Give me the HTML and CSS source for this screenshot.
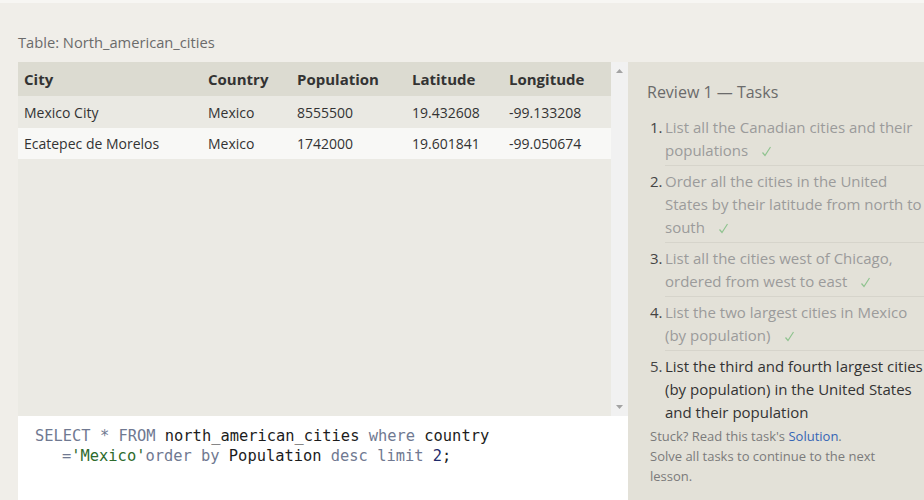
FILE: index.html
```html
<!DOCTYPE html>
<html>
<head>
<meta charset="utf-8">
<link rel="stylesheet" href="styles.css">
</head>
<body>
<div class="topstrip"></div>
<div class="page">
  <div class="left">
    <div class="title">Table: North_american_cities</div>
    <div class="tablebox">
      <div class="tablearea">
        <table class="data">
          <colgroup>
            <col class="c1"><col class="c2"><col class="c3"><col class="c4"><col class="c5">
          </colgroup>
          <thead>
            <tr><th>City</th><th>Country</th><th>Population</th><th>Latitude</th><th>Longitude</th></tr>
          </thead>
          <tbody>
            <tr class="odd"><td>Mexico City</td><td>Mexico</td><td>8555500</td><td>19.432608</td><td>-99.133208</td></tr>
            <tr class="even"><td>Ecatepec de Morelos</td><td>Mexico</td><td>1742000</td><td>19.601841</td><td>-99.050674</td></tr>
          </tbody>
        </table>
      </div>
      <div class="scrollbar">
        <svg class="arrow" width="9" height="6" viewBox="0 0 9 6"><path d="M4.5 1 L8 5 L1 5 Z" fill="#a3a3a3"/></svg>
        <svg class="arrow" width="9" height="6" viewBox="0 0 9 6"><path d="M1 1 L8 1 L4.5 5 Z" fill="#a3a3a3"/></svg>
      </div>
    </div>
    <div class="editor">
      <div class="line"><span class="kw">SELECT</span> <span class="kw">*</span> <span class="kw">FROM</span> <span class="id">north_american_cities</span> <span class="kw">where</span> <span class="id">country</span></div>
      <div class="line wrap"><span class="kw">=</span><span class="str">'Mexico'</span><span class="kw">order by</span> <span class="id">Population</span> <span class="kw">desc</span> <span class="kw">limit</span> <span class="num">2</span><span class="id">;</span></div>
    </div>
  </div>
  <div class="panel">
    <div class="ptitle">Review 1 — Tasks</div>
    <ol class="tasks">
      <li class="task done"><span class="n">1.</span><span class="t">List all the Canadian cities and their populations<svg class="check" width="11" height="11" viewBox="0 0 11 11"><path d="M1.5 6.5 L4 9.5 L9.5 1" fill="none" stroke="#8fc38f" stroke-width="1.2"/></svg></span></li>
      <li class="task done"><span class="n">2.</span><span class="t">Order all the cities in the United States by their latitude from north to south<svg class="check" width="11" height="11" viewBox="0 0 11 11"><path d="M1.5 6.5 L4 9.5 L9.5 1" fill="none" stroke="#8fc38f" stroke-width="1.2"/></svg></span></li>
      <li class="task done"><span class="n">3.</span><span class="t">List all the cities west of Chicago, ordered from west to east<svg class="check" width="11" height="11" viewBox="0 0 11 11"><path d="M1.5 6.5 L4 9.5 L9.5 1" fill="none" stroke="#8fc38f" stroke-width="1.2"/></svg></span></li>
      <li class="task done"><span class="n">4.</span><span class="t">List the two largest cities in Mexico (by population)<svg class="check" width="11" height="11" viewBox="0 0 11 11"><path d="M1.5 6.5 L4 9.5 L9.5 1" fill="none" stroke="#8fc38f" stroke-width="1.2"/></svg></span></li>
      <li class="task current"><span class="n">5.</span><span class="t">List the third and fourth largest cities (by population) in the United States and their population</span></li>
    </ol>
    <div class="stuck">Stuck? Read this task's <a class="link" href="#">Solution</a>.</div>
    <div class="stuck">Solve all tasks to continue to the next lesson.</div>
  </div>
</div>
</body>
</html>
```
FILE: styles.css
```css
html, body {
  margin: 0;
  padding: 0;
  height: 100%;
  overflow: hidden;
}
body {
  background: #f0eee9;
  font-family: "Open Sans", "Noto Sans", sans-serif;
  color: #333;
}
.topstrip {
  height: 3px;
  background: #f7f6f3;
}
.page {
  display: flex;
  height: 497px;
}
.left {
  width: 610px;
  padding-left: 18px;
  display: flex;
  flex-direction: column;
}
.title {
  height: 59px;
  box-sizing: border-box;
  padding-top: 29px;
  font-size: 14.7px;
  color: #6b6b6b;
  line-height: 20px;
}
.tablebox {
  display: flex;
  height: 354px;
}
.tablearea {
  width: 593px;
  background: #ebeae4;
}
.scrollbar {
  width: 17px;
  background: #f1f1f1;
  display: flex;
  flex-direction: column;
  justify-content: space-between;
  align-items: center;
  padding: 6px 0;
  box-sizing: border-box;
}
.data {
  border-collapse: collapse;
  width: 593px;
  table-layout: fixed;
}
.c1 { width: 184px; }
.c2 { width: 89px; }
.c3 { width: 115px; }
.c4 { width: 97px; }
.c5 { width: 108px; }
.data th {
  text-align: left;
  font-weight: 700;
  font-size: 15px;
  height: 34px;
  padding: 0 0 0 6px;
  background: #dcdbd1;
  color: #333;
}
.data td {
  font-size: 14px;
  height: 32px;
  padding: 0 0 0 6px;
  color: #333;
}
.data tr.odd td { background: #eae9e3; }
.data tr.even td { background: #f8f8f6; height: 31px; }
.editor {
  flex: 1;
  background: #fff;
  padding: 10px 0 0 17px;
  font-family: "DejaVu Sans Mono", monospace;
  font-size: 15.4px;
  line-height: 20px;
}
.line { white-space: pre; }
.line.wrap { padding-left: 27px; }
.kw { color: #707991; }
.id { color: #1c1c1c; }
.str { color: #2d6b2d; }
.num { color: #1d2a6b; }
.panel {
  margin-top: 59px;
  flex: 1;
  background: #e3e1d8;
  padding-left: 19px;
  box-sizing: border-box;
}
.ptitle {
  font-size: 16px;
  color: #6b6b6b;
  line-height: 22px;
  padding-top: 19px;
}
.tasks {
  list-style: none;
  margin: 9px 0 0 0;
  padding: 0;
}
.task {
  display: flex;
  font-size: 15px;
  line-height: 23px;
  padding: 4px 0 3px 3px;
}
.task + .task {
  border-top: 1px solid #d6d4cb;
  margin-left: 18px;
  padding-left: 0;
}
.task + .task .n { margin-left: -15px; }
.task.current { padding-bottom: 2px; }
.n {
  width: 15px;
  flex: none;
  color: #444;
}
.done .t { color: #9b9b9b; }
.current .t { color: #333; }
.check {
  margin-left: 13px;
  vertical-align: -1px;
}
.stuck {
  font-size: 13px;
  line-height: 20px;
  color: #7b7b7b;
  padding-left: 3px;
  width: 245px;
}
.link {
  color: #3565b5;
  text-decoration: none;
}
```
